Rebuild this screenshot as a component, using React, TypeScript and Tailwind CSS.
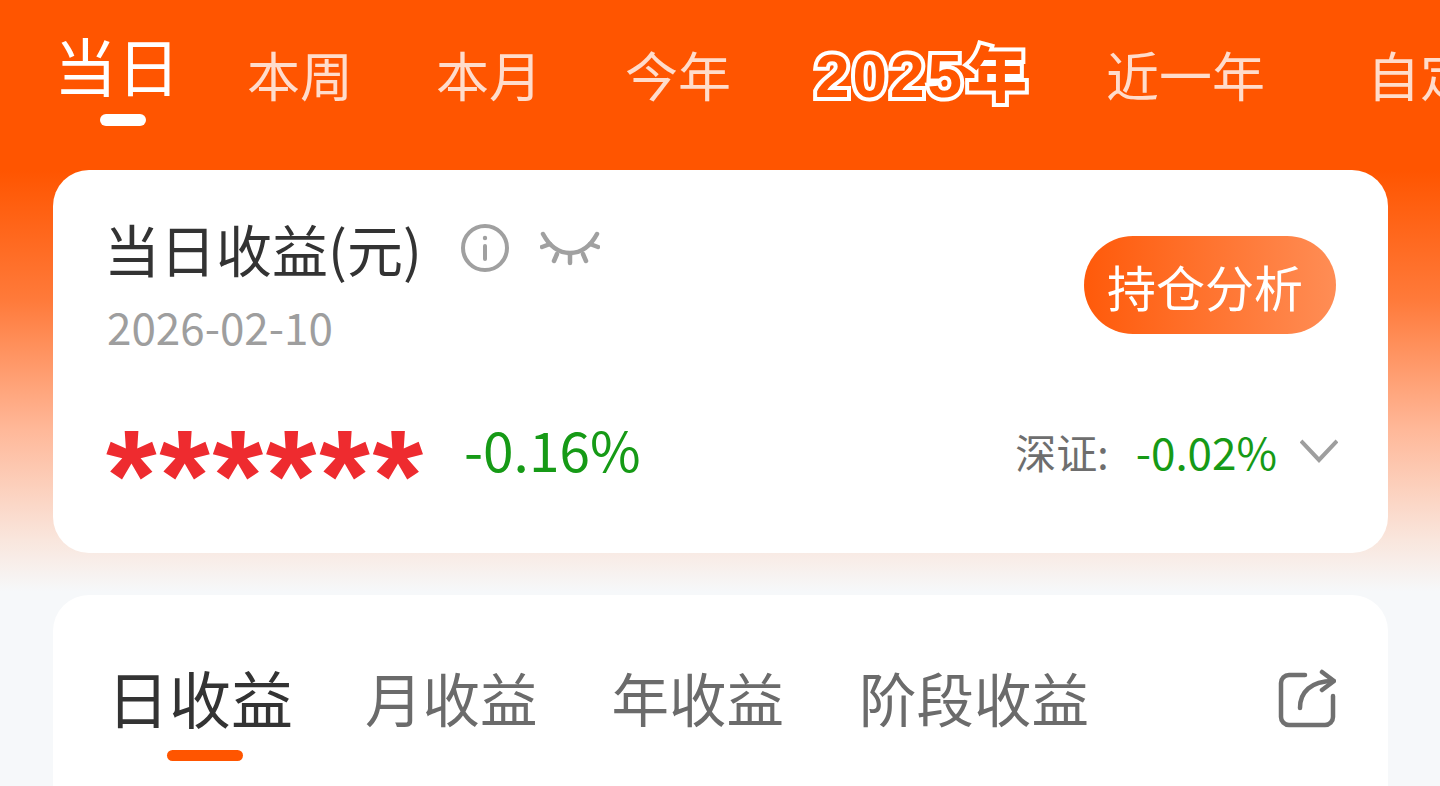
import React from 'react';

const CJK = "font-['Noto_Sans_CJK_SC','Noto_Sans',sans-serif]";

const PERIODS = [
  { label: '本周', className: 'ml-[67px]' },
  { label: '本月', className: 'ml-[83px]' },
  { label: '今年', className: 'ml-[83px]' },
];

const App: React.FC = () => {
  return (
    <div className={`${CJK} w-[1440px] h-[786px] overflow-hidden pl-[53px] pr-[52px] bg-[linear-gradient(180deg,#ff5500_0px,#ff5500_170px,#ff7a3a_300px,#ffb899_430px,#f9e6dd_540px,#f6f8fa_592px)]`}>
      {/* period tabs */}
      <div className="h-[170px] flex items-start whitespace-nowrap overflow-visible">
        <div className="ml-[1px] shrink-0 flex flex-col pt-[27px]">
          <span className="text-[63px] leading-[74px] text-white">当日</span>
          <span className="mt-[13px] ml-[46px] w-[46px] h-[12px] rounded-full bg-white" />
        </div>
        {PERIODS.map((p) => (
          <span key={p.label} className={`${p.className} shrink-0 pt-[39px] text-[53px] leading-[70px] text-[#ffdccb]`}>
            {p.label}
          </span>
        ))}
        <span className="ml-[84px] shrink-0 pt-[38px] text-[62px] leading-[76px] font-black tracking-[3px] font-['Liberation_Sans','Noto_Sans_CJK_SC',sans-serif] text-[#ff5500] [-webkit-text-stroke:8px_white] [paint-order:stroke_fill]">
          2025<span className="text-[60px] ml-[2px]">年</span>
        </span>
        <span className="ml-[76px] shrink-0 pt-[39px] text-[53px] leading-[70px] text-[#ffdccb]">近一年</span>
        <span className="ml-[102px] shrink-0 pt-[39px] text-[53px] leading-[70px] text-[#ffdccb]">自定义</span>
      </div>

      {/* summary card */}
      <div className="h-[383px] rounded-[36px] bg-white pl-[54px] pr-[52px] flex flex-col">
        <div className="flex justify-between items-start">
          <div>
            <div className="mt-[44px] flex items-center">
              <span className="-ml-[3px] text-[56px] leading-[68px] text-[#333333]">当日收益(元)</span>
              <svg className="ml-[38px] w-[50px] h-[50px]" viewBox="0 0 50 50" fill="none" stroke="#a0a0a0" strokeWidth="4" strokeLinecap="round">
                <circle cx="25" cy="25" r="22" />
                <path d="M25 23v13" />
                <circle cx="25" cy="15" r="1.2" fill="#a0a0a0" strokeWidth="2" />
              </svg>
              <svg className="ml-[30px] mt-[2px] w-[60px] h-[36px]" viewBox="0 0 60 36" fill="none" stroke="#a0a0a0" strokeWidth="4.5" strokeLinecap="round">
                <path d="M3 3C10 16 20 22 30 22S50 16 57 3" />
                <path d="M2 16l8-3M58 16l-8-3M14 30l3-7M46 30l-3-7M30 32v-9" />
              </svg>
            </div>
            <div className="mt-[17px] text-[44px] leading-[54px] text-[#9e9e9e]">2026-02-10</div>
          </div>
          <button className="mt-[66px] w-[252px] h-[98px] pr-[10px] rounded-full bg-[linear-gradient(90deg,#ff5a0a,#ff8d55)] text-[49px] leading-none text-white">
            持仓分析
          </button>
        </div>
        <div className="mt-[63px] flex items-center justify-between">
          <div className="flex items-center">
            <span className="-ml-[1px] -mt-[10px] w-[316px] h-[60px] overflow-visible text-[130px] leading-[120px] tracking-[2.7px] font-bold text-[#ee2b2f] font-['Liberation_Sans',sans-serif]">******</span>
            <span className="ml-[42px] mb-[6px] text-[55px] leading-[64px] text-[#169a16]">-0.16%</span>
          </div>
          <div className="flex items-center -mr-[2px]">
            <span className="text-[41px] leading-[60px] text-[#6e6e6e]">深证:</span>
            <span className="ml-[27px] text-[44px] leading-[60px] text-[#169a16]">-0.02%</span>
            <svg className="ml-[23px] w-[38px] h-[24px]" viewBox="0 0 38 24" fill="none" stroke="#9e9e9e" strokeWidth="4">
              <path d="M1 2l18 19L37 2" />
            </svg>
          </div>
        </div>
      </div>

      {/* earnings tabs card */}
      <div className="mt-[42px] h-[260px] rounded-t-[36px] bg-white pl-[54px] pr-[52px] flex items-start justify-between">
        <div className="flex items-start whitespace-nowrap">
          <div className="flex flex-col mt-[60px]">
            <span className="text-[62px] leading-[84px] text-[#333333]">日收益</span>
            <span className="mt-[11px] ml-[60px] w-[76px] h-[11px] rounded-full bg-[#ff5500]" />
          </div>
          <span className="ml-[72px] mt-[62px] text-[57.5px] leading-[80px] text-[#6b6b6b]">月收益</span>
          <span className="ml-[74px] mt-[62px] text-[57.5px] leading-[80px] text-[#6b6b6b]">年收益</span>
          <span className="ml-[75px] mt-[62px] text-[57.5px] leading-[80px] text-[#6b6b6b]">阶段收益</span>
        </div>
        <svg className="mt-[74px] w-[58px] h-[60px]" viewBox="0 0 58 60" fill="none" stroke="#707070" strokeWidth="4.5" strokeLinecap="round" strokeLinejoin="round">
          <path d="M27 6H11a8 8 0 0 0-8 8v34a8 8 0 0 0 8 8h36a8 8 0 0 0 8-8V27" />
          <path d="M22 39c0-16 11-27 33-27" />
          <path d="M44 3l12 9-12 9" />
        </svg>
      </div>
    </div>
  );
};

export default App;
